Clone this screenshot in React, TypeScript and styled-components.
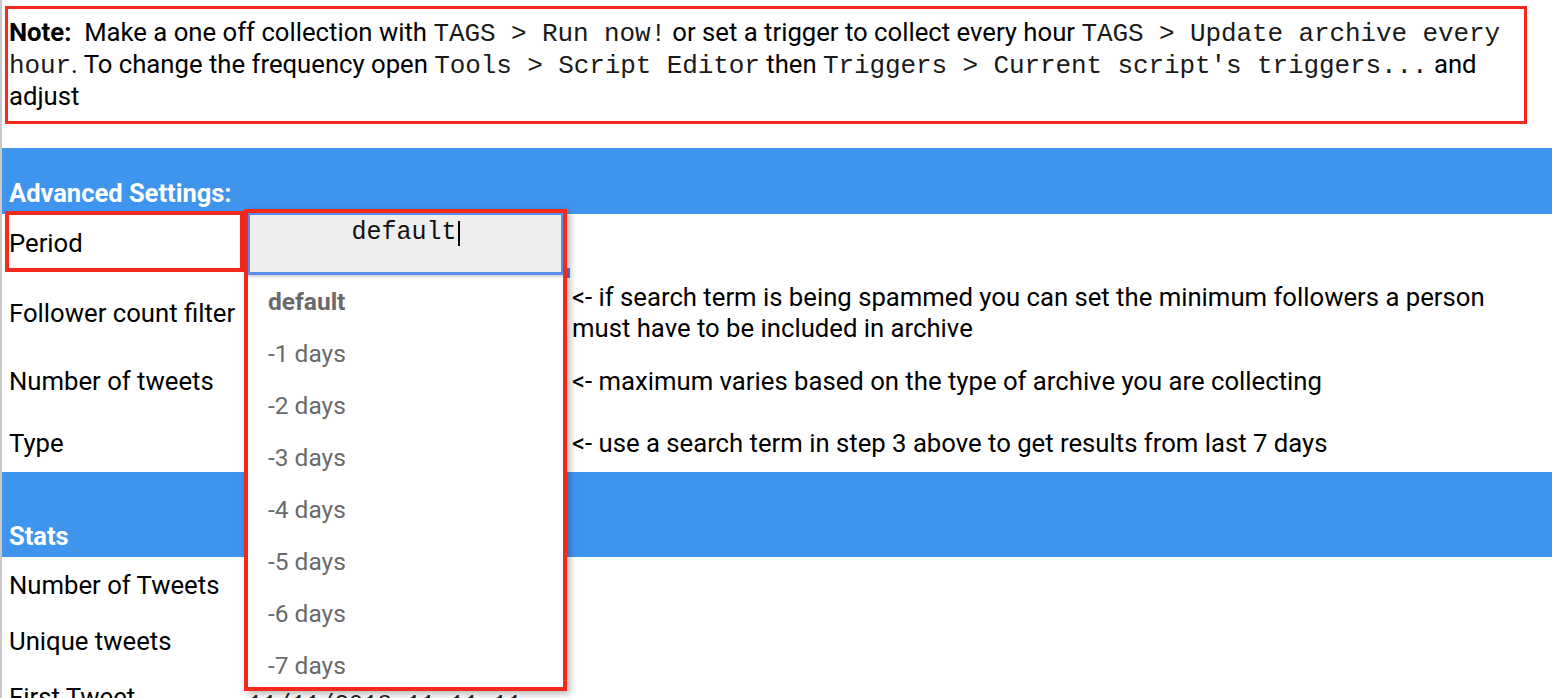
import React from "react";
import styled, { createGlobalStyle } from "styled-components";

const Global = createGlobalStyle`
  html, body { margin: 0; padding: 0; background: #fff; overflow: hidden; }
  body { font-family: Roboto, "Liberation Sans", Arial, sans-serif; color: #000; }
`;

const RED = "#f3291c";
const BLUE = "#3f95ee";
const SANS = `Roboto, "Liberation Sans", Arial, sans-serif`;
const MONO = `"Liberation Mono", "Courier New", monospace`;

const Page = styled.div`
  border-left: 2px solid #c8c8c8;
  height: 698px;
  box-sizing: border-box;
  padding-top: 6px;
  overflow: hidden;
`;

const Note = styled.div`
  margin: 0 25px 0 3px;
  border: 3px solid ${RED};
  padding: 7px 0 9px 1px;
  height: 118px;
  box-sizing: border-box;
  font-size: 25.7px;
  line-height: 32px;
`;

const Code = styled.code`
  font-family: ${MONO};
  font-size: 26px;
  line-height: 1;
  color: #1a1a1a;
  letter-spacing: -0.1px;
`;

const SectionBar = styled.div<{ $h: number; $mt?: number }>`
  height: ${(p) => p.$h}px;
  margin-top: ${(p) => p.$mt ?? 0}px;
  background: ${BLUE};
  color: #fff;
  font-weight: 700;
  font-size: 25.5px;
  display: flex;
  align-items: flex-end;
  box-sizing: border-box;
  padding: 0 0 6px 7px;
`;

const Row = styled.div<{ $h: number; $pt?: number }>`
  display: grid;
  grid-template-columns: 242px 324px 1fr;
  height: ${(p) => p.$h}px;
  box-sizing: border-box;
  padding-top: ${(p) => p.$pt ?? 0}px;
  font-size: 25.7px;
`;

const Label = styled.div<{ $boxed?: boolean }>`
  position: relative;
  display: flex;
  align-items: center;
  padding-left: 7px;
  white-space: nowrap;
  ${(p) =>
    p.$boxed
      ? `&::after {
          content: "";
          position: absolute;
          left: 3px; right: 0; top: -3px; bottom: 0;
          border: 4px solid ${RED};
          pointer-events: none;
        }`
      : ""}
`;

const Value = styled.div<{ $offset?: number }>`
  position: relative;
  display: flex;
  align-items: center;
  padding-left: 4px;
  padding-top: ${(p) => p.$offset ?? 0}px;
  font-family: ${MONO};
  font-size: 24px;
  color: #222;
`;

const Desc = styled.div`
  display: flex;
  align-items: center;
  padding-left: 4px;
  line-height: 31px;
  padding-right: 40px;
`;

const SelectionMark = styled.span`
  position: absolute;
  left: 322px;
  top: 54px;
  width: 4px;
  height: 10px;
  background: #4f86e8;
`;

const Dropdown = styled.div`
  position: absolute;
  left: 0;
  top: -5px;
  width: 323px;
  height: 482px;
  box-sizing: border-box;
  border: 4px solid ${RED};
  background: #fff;
  box-shadow: 3px 3px 7px rgba(0, 0, 0, 0.28);
  z-index: 5;
  display: flex;
  flex-direction: column;
  overflow: hidden;
`;

const InputBox = styled.div`
  height: 62px;
  flex: none;
  box-sizing: border-box;
  background: #eeeeee;
  border: 2px solid #5b8de8;
  border-bottom-width: 3px;
  display: flex;
  justify-content: center;
  align-items: flex-start;
  padding-top: 3px;
  font-family: ${MONO};
  font-size: 25px;
  color: #111;
  box-shadow: 0 2px 2px rgba(0, 0, 0, 0.18);
`;

const Caret = styled.span`
  display: inline-block;
  width: 2px;
  height: 25px;
  background: #000;
  margin-left: 1px;
  margin-top: 3px;
`;

const Menu = styled.ul`
  list-style: none;
  margin: 0;
  padding: 0;
  flex: 1;
  overflow: hidden;
  font-family: ${SANS};
`;

const Option = styled.li<{ $selected?: boolean }>`
  height: 52px;
  display: flex;
  align-items: center;
  padding-left: 20px;
  font-size: 24.5px;
  color: #6a6a6a;
  font-weight: ${(p) => (p.$selected ? 700 : 400)};
`;

const advanced = [
  { label: "Period", h: 58, boxed: true, dropdown: true },
  {
    label: "Follower count filter",
    h: 82,
    desc: "<- if search term is being spammed you can set the minimum followers a person must have to be included in archive",
  },
  {
    label: "Number of tweets",
    h: 54,
    desc: "<- maximum varies based on the type of archive you are collecting",
  },
  {
    label: "Type",
    h: 64,
    pt: 6,
    desc: "<- use a search term in step 3 above to get results from last 7 days",
  },
];

const stats = [
  { label: "Number of Tweets", h: 56 },
  { label: "Unique tweets", h: 56 },
  { label: "First Tweet", h: 56, value: "11/11/2018 11:11:11" },
];

const options = ["default", "-1 days", "-2 days", "-3 days", "-4 days", "-5 days", "-6 days", "-7 days"];

export default function App() {
  return (
    <>
      <Global />
      <Page>
        <Note>
          <b>Note:</b>&nbsp; Make a one off collection with <Code>TAGS &gt; Run now!</Code> or set a trigger to collect
          every hour <Code>TAGS &gt; Update archive every hour</Code>. To change the frequency open{" "}
          <Code>Tools &gt; Script Editor</Code> then <Code>Triggers &gt; Current script's triggers...</Code> and adjust
        </Note>

        <SectionBar $h={66} $mt={24}>Advanced Settings:</SectionBar>
        {advanced.map((r) => (
          <Row key={r.label} $h={r.h} $pt={r.pt}>
            <Label $boxed={r.boxed}>{r.label}</Label>
            <Value>
              {r.dropdown && (
                <>
                  <SelectionMark />
                  <Dropdown>
                    <InputBox>
                      default
                      <Caret />
                    </InputBox>
                    <Menu>
                      {options.map((o, i) => (
                        <Option key={o} $selected={i === 0}>
                          {o}
                        </Option>
                      ))}
                    </Menu>
                  </Dropdown>
                </>
              )}
            </Value>
            <Desc>{r.desc}</Desc>
          </Row>
        ))}

        <SectionBar $h={85}>Stats</SectionBar>
        {stats.map((r) => (
          <Row key={r.label} $h={r.h}>
            <Label>{r.label}</Label>
            <Value $offset={14}>{r.value}</Value>
            <Desc />
          </Row>
        ))}
      </Page>
    </>
  );
}
